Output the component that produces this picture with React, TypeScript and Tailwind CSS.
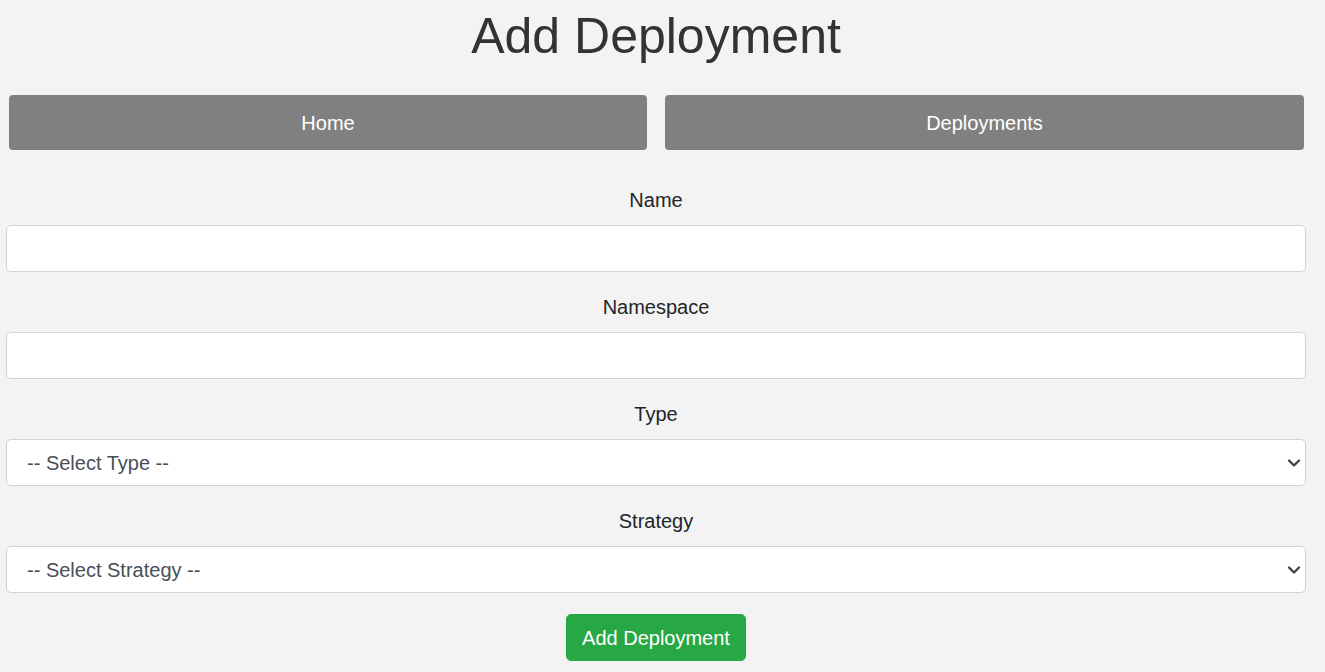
import React from "react";

function Chevron() {
  return (
    <svg
      className="pointer-events-none absolute right-[5px] top-1/2 -translate-y-1/2"
      width="14"
      height="9"
      viewBox="0 0 14 9"
      fill="none"
    >
      <polyline points="2,2 7,7 12,2" stroke="#3f444a" strokeWidth="2.4" strokeLinecap="round" strokeLinejoin="round" />
    </svg>
  );
}

function Field({ label, children }: { label: string; children: React.ReactNode }) {
  return (
    <div className="mb-[20px]">
      <label className="block text-center text-[20px] leading-[30px] text-[#212529] mb-[10px]">{label}</label>
      {children}
    </div>
  );
}

const inputCls =
  "block w-full h-[47px] bg-white border border-[#ced4da] rounded-[5px] px-[15px] text-[20px] text-[#495057] outline-none";

const selectCls =
  "block w-full h-[47px] bg-white border border-[#ced4da] rounded-[5px] pl-[20px] pr-[30px] text-[20px] text-[#495057] outline-none appearance-none";

export default function App() {
  return (
    <div
      className="min-h-[672px] bg-[#f3f3f3]"
      style={{ fontFamily: '"Liberation Sans", Arial, sans-serif' }}
    >
      <div className="ml-[6px] w-[1300px]">
        <h1 className="pt-[6px] text-center text-[50px] leading-[60px] text-[#333333] font-normal">
          Add Deployment
        </h1>
        <nav className="mt-[29px] flex gap-[18px] pl-[3px]">
          <a className="w-[638px] h-[55px] flex items-center justify-center rounded-[4px] bg-[#808080] text-white text-[20px]">
            Home
          </a>
          <a className="w-[639px] h-[55px] flex items-center justify-center rounded-[4px] bg-[#808080] text-white text-[20px]">
            Deployments
          </a>
        </nav>
        <form className="mt-[35px]">
          <Field label="Name">
            <input className={inputCls} type="text" />
          </Field>
          <Field label="Namespace">
            <input className={inputCls} type="text" />
          </Field>
          <Field label="Type">
            <div className="relative">
              <select className={selectCls} defaultValue="">
                <option value="">-- Select Type --</option>
              </select>
              <Chevron />
            </div>
          </Field>
          <Field label="Strategy">
            <div className="relative">
              <select className={selectCls} defaultValue="">
                <option value="">-- Select Strategy --</option>
              </select>
              <Chevron />
            </div>
          </Field>
          <div className="flex justify-center pt-[1px]">
            <button
              type="button"
              className="h-[47px] w-[180px] rounded-[5px] bg-[#28a745] border border-[#28a745] text-white text-[20px]"
            >
              Add Deployment
            </button>
          </div>
        </form>
      </div>
    </div>
  );
}
